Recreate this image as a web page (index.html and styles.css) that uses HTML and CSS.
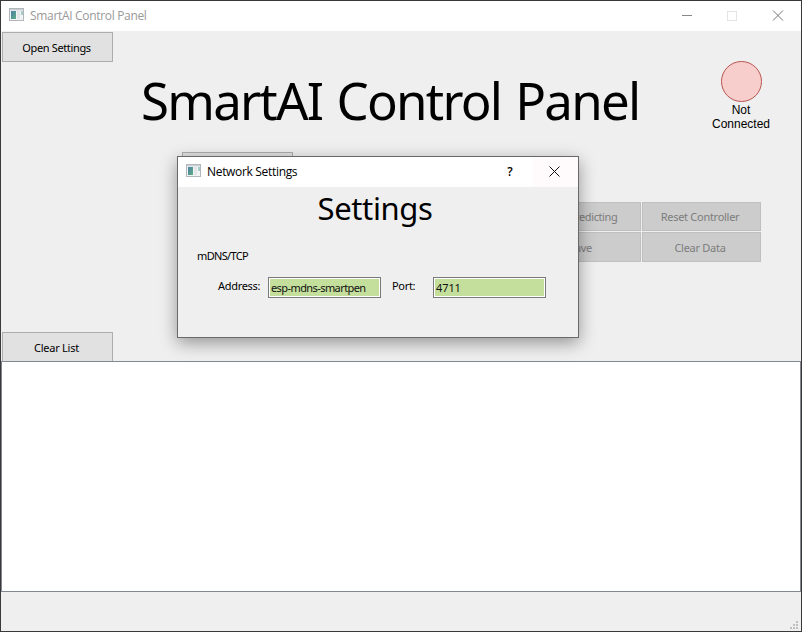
FILE: index.html
```html
<!DOCTYPE html>
<html lang="en">
<head>
<meta charset="utf-8">
<title>SmartAI Control Panel</title>
<link rel="stylesheet" href="styles.css">
</head>
<body>
<svg width="0" height="0" class="defs">
  <defs>
    <linearGradient id="pane" x1="0" y1="0" x2="1" y2="1">
      <stop offset="0" stop-color="#4c7fa6"/><stop offset="1" stop-color="#5fae83"/>
    </linearGradient>
    <symbol id="app" viewBox="0 0 15 13">
      <rect x=".5" y=".5" width="14" height="12" fill="#f2f3f4" stroke="#b2b7bc"/>
      <rect x="1" y="1" width="13" height="1.3" fill="#c9ced3"/>
      <rect x="2" y="3" width="5" height="8" fill="url(#pane)"/>
      <rect x="8" y="3" width="3" height="8" fill="#e3e5e7"/>
      <rect x="12" y="3" width="2" height="4" fill="#a5cfc6"/>
    </symbol>
  </defs>
</svg>
<div class="window">
  <header class="titlebar">
    <svg class="app-icon"><use href="#app"/></svg>
    <span class="caption">SmartAI Control Panel</span>
    <svg class="controls" width="137" height="30" fill="none" shape-rendering="crispEdges">
      <path d="M17 14.5h10" stroke="#888"/>
      <rect x="62.500" y="10.500" width="9" height="9" stroke="#e4e4e4"/>
      <path d="M108 9.500l10 10M118 9.500l-10 10" stroke="#777" shape-rendering="auto"/>
    </svg>
  </header>
  <main class="content">
    <div class="top">
      <button class="btn">Open Settings</button>
      <h1>SmartAI Control Panel</h1>
      <div class="status"><i class="lamp"></i><span>Not<br>Connected</span></div>
    </div>
    <div class="middle">
      <button class="btn connect"></button>
      <div class="actions">
        <button disabled class="wide">Start Predicting</button>
        <button disabled>Reset Controller</button>
        <button disabled class="wide">Save</button>
        <button disabled>Clear Data</button>
      </div>
    </div>
    <button class="btn clear">Clear List</button>
    <div class="list"></div>
  </main>
  <footer class="statusbar">
    <svg width="8" height="8" fill="#bfbfbf"><path d="M6 0h2v2h-2zM3 3h2v2h-2zM6 3h2v2h-2zM0 6h2v2h-2zM3 6h2v2h-2zM6 6h2v2h-2z"/></svg>
  </footer>
</div>
<section class="dialog">
  <header class="titlebar">
    <svg class="app-icon"><use href="#app"/></svg>
    <span class="caption">Network Settings</span>
    <span class="help">?</span>
    <span class="close"><svg width="11" height="11" stroke="#111"><path d="M.5.5l10 10M10.500.5l-10 10"/></svg></span>
  </header>
  <h2>Settings</h2>
  <p class="group">mDNS/TCP</p>
  <div class="fields">
    <label class="address">Address:</label>
    <div class="field"><span>esp-mdns-smartpen</span></div>
    <label class="port">Port:</label>
    <div class="field"><span class="number">4711</span></div>
  </div>
</section>
</body>
</html>
```
FILE: styles.css
```css
* { box-sizing: border-box; }
body { margin: 0; width: 802px; height: 632px; overflow: hidden; font: 11px/14px "Noto Sans", sans-serif; color: #000; }
.defs { position: absolute; }
.window { display: flex; flex-direction: column; width: 802px; height: 632px; border: 1px solid #3a383a; background: #efefef; }
.titlebar { display: flex; align-items: center; height: 30px; background: #fff; font: 12px/16px "Open Sans", sans-serif; }
.app-icon { width: 15px; height: 13px; margin: -3px 0 0 8px; flex: none; }
.caption { margin-left: 6px; letter-spacing: -.32px; white-space: nowrap; }
.window .caption { color: #999; }
.controls { margin-left: auto; margin-right: -1px; }
.content { display: flex; flex-direction: column; flex: 1; }
.top { display: flex; height: 121px; padding: 1px 0 0 1px; }
button { font: inherit; padding: 0; border-radius: 0; }
.btn { width: 111px; height: 30px; flex: none; border: 1px solid #adadad; background: #e1e1e1; letter-spacing: -.35px; padding: 2px 2px 0 0; color: #000; }
h1 { margin: 33px 0 0 28px; width: 511px; font: 51px/70px "Noto Sans", sans-serif; white-space: nowrap; letter-spacing: -1.75px; word-spacing: 2.500px; }
.status { display: flex; flex-direction: column; align-items: center; width: 80px; margin: 29px 0 0 49px; font: 12px/14px "Liberation Sans", sans-serif; text-align: center; }
.lamp { width: 41px; height: 41px; border: 1px solid #b85450; border-radius: 50%; background: #f8cecc; margin-bottom: 1px; }
.middle { display: flex; height: 180px; }
.connect { margin-left: 181px; }
.actions { display: grid; grid-template-columns: 119px 119px; grid-template-rows: 29px 30px; gap: 1px; margin: 50px 0 0 229px; height: 60px; }
.actions button { border: 1px solid #bfbfbf; background: #ccc; color: #7c7c7c; padding: 1px 3px 0 0; letter-spacing: -.28px; }
.actions .wide { letter-spacing: -.4px; padding-right: 2px; }
.clear { height: 29px; margin-left: 1px; border-bottom: 0; letter-spacing: -.25px; }
.list { height: 231px; border: 1px solid #828790; background: #fff; }
.statusbar { height: 39px; display: flex; justify-content: flex-end; align-items: flex-end; padding: 0 3px 2px; }
.dialog { position: absolute; left: 177px; top: 156px; width: 402px; height: 182px; border: 1px solid #696969; background: #efefef; box-shadow: 0 5px 16px rgba(0,0,0,.38); }
.help { margin-left: auto; width: 46px; text-align: center; font-weight: 600; }
.close { width: 45px; height: 30px; background: #fffafc; display: flex; align-items: center; justify-content: center; padding: 0 2px 1px 0; }
h2 { margin: 0; height: 46px; font: 31px/43px "Noto Sans", sans-serif; text-align: center; padding-right: 6px; letter-spacing: -.4px; }
.group { margin: 16px 0 0 19px; letter-spacing: -.65px; }
.fields { display: flex; margin-top: 14px; padding-left: 39px; }
.fields label { padding-top: 2px; padding-left: 1px; letter-spacing: -.3px; }
.fields .address { width: 51px; }
.fields .port { width: 41px; margin-left: 11px; padding-left: 0; }
.field { width: 113px; height: 21px; border: 1px solid #7a7a7a; padding: 1px; background: #fff; }
.field span { display: block; height: 17px; background: #c4df9b; line-height: 18px; padding-left: 1px; color: #111; letter-spacing: -.58px; }
.field .number { letter-spacing: -.1px; }
```
